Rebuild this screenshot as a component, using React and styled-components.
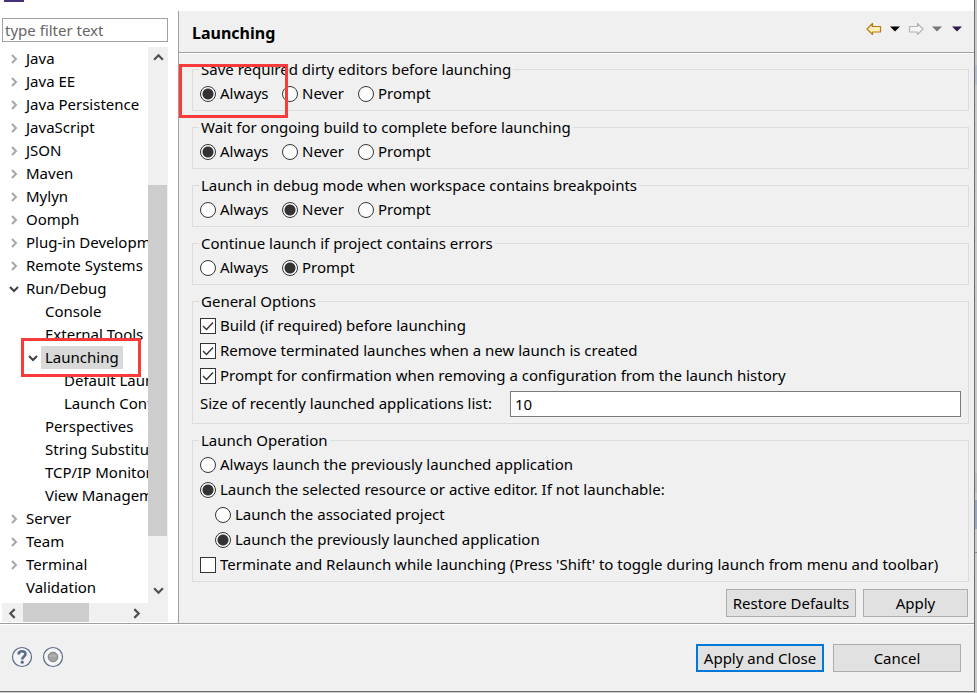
import { useState } from "react";
import styled, { createGlobalStyle } from "styled-components";

const treeItems = [
  { label: "Java", level: 0, state: "closed" },
  { label: "Java EE", level: 0, state: "closed" },
  { label: "Java Persistence", level: 0, state: "closed" },
  { label: "JavaScript", level: 0, state: "closed" },
  { label: "JSON", level: 0, state: "closed" },
  { label: "Maven", level: 0, state: "closed" },
  { label: "Mylyn", level: 0, state: "closed" },
  { label: "Oomph", level: 0, state: "closed" },
  { label: "Plug-in Development", level: 0, state: "closed" },
  { label: "Remote Systems", level: 0, state: "closed" },
  { label: "Run/Debug", level: 0, state: "open" },
  { label: "Console", level: 1 },
  { label: "External Tools", level: 1 },
  { label: "Launching", level: 1, state: "open", selected: true },
  { label: "Default Launchers", level: 2 },
  { label: "Launch Configurations", level: 2 },
  { label: "Perspectives", level: 1 },
  { label: "String Substitution", level: 1 },
  { label: "TCP/IP Monitor", level: 1 },
  { label: "View Management", level: 1 },
  { label: "Server", level: 0, state: "closed" },
  { label: "Team", level: 0, state: "closed" },
  { label: "Terminal", level: 0, state: "closed" },
  { label: "Validation", level: 0 },
];

const launchGroups = [
  {
    name: "save",
    title: "Save required dirty editors before launching",
    options: ["Always", "Never", "Prompt"],
    value: "Always",
    marked: true,
  },
  {
    name: "wait",
    title: "Wait for ongoing build to complete before launching",
    options: ["Always", "Never", "Prompt"],
    value: "Always",
  },
  {
    name: "debug",
    title: "Launch in debug mode when workspace contains breakpoints",
    options: ["Always", "Never", "Prompt"],
    value: "Never",
  },
  {
    name: "errors",
    title: "Continue launch if project contains errors",
    options: ["Always", "Prompt"],
    value: "Prompt",
  },
];

const Chevron = ({ dir, color = "#505050", size = 10, weight = 2 }) => {
  const paths = {
    right: "M3 1 L7 5 L3 9",
    left: "M7 1 L3 5 L7 9",
    down: "M1 3 L5 7 L9 3",
    up: "M1 7 L5 3 L9 7",
  };
  return (
    <svg width={size} height={size} viewBox="0 0 10 10" aria-hidden="true">
      <path d={paths[dir]} fill="none" stroke={color} strokeWidth={weight} />
    </svg>
  );
};

const Arrow = ({ back }) => (
  <svg width="16" height="14" viewBox="0 0 16 14" aria-hidden="true">
    <path
      d={
        back
          ? "M1 7 L6.5 1.5 V4.5 H14.5 V10 H6.5 V12.5 Z"
          : "M15 7 L9.5 1.5 V4.5 H1.5 V10 H9.5 V12.5 Z"
      }
      fill={back ? "#fdf0b8" : "#f6f6f6"}
      stroke={back ? "#b87a14" : "#b4b4b4"}
      strokeWidth="1.2"
      strokeLinejoin="round"
    />
  </svg>
);

const Caret = ({ color }) => (
  <svg width="10" height="6" viewBox="0 0 10 6" aria-hidden="true">
    <path d="M0 0.5 H10 L5 5.5 Z" fill={color} />
  </svg>
);

const HelpIcon = () => (
  <svg width="22" height="22" viewBox="0 0 22 22" aria-hidden="true">
    <circle cx="11" cy="11" r="9.5" fill="#f4f4f6" stroke="#5a6b8c" strokeWidth="1.2" />
    <path
      d="M7.6 8.4 C7.6 4.2 14.6 4.3 14.5 8 C14.4 10.6 11.2 10.6 11.2 13.6"
      fill="none"
      stroke="#5a6b8c"
      strokeWidth="2.6"
    />
    <circle cx="11.2" cy="16.2" r="1.6" fill="#5a6b8c" />
  </svg>
);

const RecordIcon = () => (
  <svg width="22" height="22" viewBox="0 0 22 22" aria-hidden="true">
    <circle cx="11" cy="11" r="9.5" fill="#f6f6f6" stroke="#5a6b8c" strokeWidth="1.2" />
    <circle cx="11" cy="11" r="4.8" fill="#a2a2a2" stroke="#808080" />
    <path d="M7.5 10 H14.5" stroke="#b4b4b4" strokeWidth="1.5" />
  </svg>
);

const Option = ({ type, name, label, ...rest }) => (
  <OptionLabel>
    {type === "radio" ? (
      <Radio type="radio" name={name} {...rest} />
    ) : (
      <CheckHolder>
        <Check type="checkbox" name={name} {...rest} />
        <svg width="16" height="16" viewBox="0 0 16 16" aria-hidden="true">
          <path d="M3 8 L6.5 11.5 L13 4.5" fill="none" stroke="#333" strokeWidth="1.4" />
        </svg>
      </CheckHolder>
    )}
    {label}
  </OptionLabel>
);

const App = () => {
  const [filter, setFilter] = useState("");

  return (
    <>
      <GlobalStyle />
      <Desktop>
        <Dialog>
          <TitleStrip>
            <AppLogo />
          </TitleStrip>
          <Body>
            <Sidebar>
              <FilterInput
                type="text"
                aria-label="Filter preferences"
                placeholder="type filter text"
                value={filter}
                onChange={(e) => setFilter(e.target.value)}
              />
              <TreeArea>
                <Tree>
                  {treeItems.map((item) => (
                    <TreeRow key={item.label} $level={item.level}>
                      <Twisty>
                        {item.state === "closed" && (
                          <Chevron dir="right" color="#a6a6a6" />
                        )}
                        {item.state === "open" && <Chevron dir="down" color="#404040" />}
                      </Twisty>
                      <TreeLabel $selected={item.selected}>{item.label}</TreeLabel>
                      {item.selected && <TreeMark />}
                    </TreeRow>
                  ))}
                </Tree>
                <VerticalBar>
                  <ScrollButton aria-label="Scroll up">
                    <Chevron dir="up" size={11} />
                  </ScrollButton>
                  <Spacer $grow={118} />
                  <VerticalThumb />
                  <Spacer $grow={45} />
                  <ScrollButton aria-label="Scroll down">
                    <Chevron dir="down" size={11} />
                  </ScrollButton>
                </VerticalBar>
              </TreeArea>
              <HorizontalBar>
                <ScrollButton aria-label="Scroll left">
                  <Chevron dir="left" size={11} />
                </ScrollButton>
                <HorizontalThumb />
                <Spacer $grow={1} />
                <ScrollButton aria-label="Scroll right">
                  <Chevron dir="right" size={11} />
                </ScrollButton>
              </HorizontalBar>
            </Sidebar>

            <Page>
              <PageHeader>
                <PageTitle>Launching</PageTitle>
                <HistoryBar>
                  <IconButton aria-label="Back">
                    <Arrow back />
                  </IconButton>
                  <IconButton aria-label="Back history">
                    <Caret color="#000" />
                  </IconButton>
                  <IconButton aria-label="Forward">
                    <Arrow />
                  </IconButton>
                  <IconButton aria-label="Forward history">
                    <Caret color="#777" />
                  </IconButton>
                  <MenuButton aria-label="Menu">
                    <Caret color="#2e1a47" />
                  </MenuButton>
                </HistoryBar>
              </PageHeader>

              <Groups>
                {launchGroups.map((group) => (
                  <Group key={group.name}>
                    <Legend>{group.title}</Legend>
                    <OptionRow>
                      {group.options.map((option) => (
                        <Option
                          key={option}
                          type="radio"
                          name={group.name}
                          label={option}
                          defaultChecked={option === group.value}
                        />
                      ))}
                    </OptionRow>
                    {group.marked && <GroupMark />}
                  </Group>
                ))}

                <Group>
                  <Legend>General Options</Legend>
                  <Option
                    type="checkbox"
                    name="build"
                    label="Build (if required) before launching"
                    defaultChecked
                  />
                  <Option
                    type="checkbox"
                    name="remove"
                    label="Remove terminated launches when a new launch is created"
                    defaultChecked
                  />
                  <Option
                    type="checkbox"
                    name="confirm"
                    label="Prompt for confirmation when removing a configuration from the launch history"
                    defaultChecked
                  />
                  <SizeRow>
                    <SizeLabel htmlFor="historySize">
                      Size of recently launched applications list:
                    </SizeLabel>
                    <SizeInput id="historySize" type="text" defaultValue="10" />
                  </SizeRow>
                </Group>

                <Group>
                  <Legend>Launch Operation</Legend>
                  <Option
                    type="radio"
                    name="operation"
                    label="Always launch the previously launched application"
                  />
                  <Option
                    type="radio"
                    name="operation"
                    label="Launch the selected resource or active editor. If not launchable:"
                    defaultChecked
                  />
                  <Indented>
                    <Option
                      type="radio"
                      name="fallback"
                      label="Launch the associated project"
                    />
                    <Option
                      type="radio"
                      name="fallback"
                      label="Launch the previously launched application"
                      defaultChecked
                    />
                  </Indented>
                  <Option
                    type="checkbox"
                    name="relaunch"
                    label="Terminate and Relaunch while launching (Press 'Shift' to toggle during launch from menu and toolbar)"
                  />
                </Group>
              </Groups>

              <PageButtons>
                <Button $width={130}>Restore Defaults</Button>
                <Button $width={105}>Apply</Button>
              </PageButtons>
            </Page>
          </Body>

          <Footer>
            <FooterIcons>
              <IconButton aria-label="Help">
                <HelpIcon />
              </IconButton>
              <IconButton aria-label="Record preferences">
                <RecordIcon />
              </IconButton>
            </FooterIcons>
            <FooterButtons>
              <PrimaryButton $width={128}>Apply and Close</PrimaryButton>
              <Button $width={128}>Cancel</Button>
            </FooterButtons>
          </Footer>
        </Dialog>
      </Desktop>
    </>
  );
};

//Styled Components
const GlobalStyle = createGlobalStyle`
  * {
    box-sizing: border-box;
  }

  body {
    margin: 0;
    color: #000;
    font-family: "Noto Sans", "Open Sans", sans-serif;
    font-size: 15px;
    line-height: 23px;
  }

  button, input {
    font: inherit;
    color: inherit;
  }

  svg {
    display: block;
    flex: none;
  }
`;

//The window behind the dialog shows through as a thin strip on the right
const Desktop = styled.div`
  display: flex;
  min-height: 100vh;
  padding: 0 2px 1px 0;
  background: linear-gradient(
    #cacaca 65px,
    #b4bfcd 65px 85px,
    #cacaca 85px 473px,
    #bfbfbf 473px 493px,
    #cacaca 493px 500px,
    #9aa8c0 500px 529px,
    #cacaca 529px 552px,
    #8a8a8a 552px 553px,
    #cacaca 553px
  );
`;

const Dialog = styled.main`
  display: flex;
  flex-direction: column;
  flex: 1;
  min-width: 0;
  border-right: 1px solid #6e6e6e;
  border-bottom: 1px solid #6e6e6e;
  background: #f0f0f0;
`;

const TitleStrip = styled.div`
  height: 11px;
  padding-left: 4px;
  background: #fff;
`;

const AppLogo = styled.div`
  width: 20px;
  height: 2px;
  background: #46307c;
`;

const Body = styled.div`
  display: flex;
  border-bottom: 1px solid #a0a0a0;
`;

const Sidebar = styled.nav`
  display: flex;
  flex-direction: column;
  flex: none;
  width: 178px;
  padding: 7px 10px 1px 2px;
  background: #fff;
`;

const FilterInput = styled.input`
  width: 100%;
  height: 24px;
  margin-bottom: 5px;
  padding: 0 2px;
  border: 1px solid #a0a0a6;
  border-radius: 0;
  background: #fff;

  &::placeholder {
    color: #666;
    opacity: 1;
  }
`;

const TreeArea = styled.div`
  display: flex;
  flex: 1;
  min-height: 0;
`;

const Tree = styled.ul`
  flex: 1;
  min-width: 0;
  margin: 0;
  padding: 0;
  overflow: hidden;
  list-style: none;
`;

const TreeRow = styled.li`
  position: relative;
  display: flex;
  align-items: center;
  height: 23px;
  padding-left: ${(props) => props.$level * 19 + 7}px;
  white-space: nowrap;
`;

const Twisty = styled.span`
  flex: none;
  width: 13px;
  padding-top: 1px;
`;

const TreeLabel = styled.span`
  padding: 0 4px;
  background: ${(props) => (props.$selected ? "#d9d9d9" : "transparent")};
`;

const TreeMark = styled.div`
  position: absolute;
  z-index: 1;
  top: -8px;
  left: 19px;
  width: 120px;
  height: 39px;
  border: 3px solid #fb3b3b;
  pointer-events: none;
`;

const VerticalBar = styled.div`
  display: flex;
  flex-direction: column;
  flex: none;
  width: 20px;
  background: #f0f0f0;
  padding-bottom: 2px;
`;

const HorizontalBar = styled.div`
  display: flex;
  height: 19px;
  padding-right: 22px;
  background: #f0f0f0;
`;

const ScrollButton = styled.button`
  display: flex;
  align-items: center;
  justify-content: center;
  flex: none;
  width: 20px;
  height: 20px;
  padding: 0;
  border: 0;
  background: transparent;
`;

const Spacer = styled.div`
  flex: ${(props) => props.$grow} 0 0;
`;

const VerticalThumb = styled.div`
  flex: 352 0 0;
  margin-right: 1px;
  background: #cdcdcd;
`;

const HorizontalThumb = styled.div`
  width: 66px;
  margin-left: 1px;
  background: #cdcdcd;
`;

const Page = styled.section`
  display: flex;
  flex-direction: column;
  flex: 1;
  min-width: 0;
  border-left: 1px solid #a0a0a0;
`;

const PageHeader = styled.header`
  display: flex;
  align-items: center;
  justify-content: space-between;
  height: 42px;
  padding: 0 12px 0 13px;
  border-bottom: 1px solid #a0a0a0;
  box-shadow: 0 1px 0 #fff;
`;

const PageTitle = styled.h1`
  margin: 0;
  padding-top: 3px;
  font-size: 16px;
  font-weight: 700;
`;

const HistoryBar = styled.div`
  display: flex;
  align-items: center;
  gap: 8px;
  padding-bottom: 5px;
`;

const IconButton = styled.button`
  padding: 0;
  border: 0;
  background: transparent;
`;

const MenuButton = styled(IconButton)`
  margin-left: 2px;
`;

const Groups = styled.div`
  display: flex;
  flex-direction: column;
  gap: 5px;
  padding: 5px 5px 0 13px;
`;

const Group = styled.fieldset`
  position: relative;
  min-width: 0;
  margin: 0;
  padding: 0 7px 4px;
  border: 1px solid #dcdcdc;
`;

const Legend = styled.legend`
  height: 23px;
  padding: 0 2px;
  margin-left: -1px;
`;

const GroupMark = styled.div`
  position: absolute;
  z-index: 1;
  top: -17px;
  left: -14px;
  width: 109px;
  height: 54px;
  border: 3px solid #fb3b3b;
  pointer-events: none;
`;

const OptionRow = styled.div`
  display: grid;
  grid-template-columns: 70px 64px auto;
  gap: 12px;
`;

const OptionLabel = styled.label`
  display: flex;
  align-items: center;
  gap: 4px;
  height: 25px;
  white-space: nowrap;
`;

const Radio = styled.input`
  appearance: none;
  flex: none;
  width: 16px;
  height: 16px;
  margin: 0;
  border: 1px solid #333;
  border-radius: 50%;
  background: #fff;

  &:checked {
    background: radial-gradient(circle, #333 5px, #fff 6px);
  }
`;

const CheckHolder = styled.span`
  display: grid;

  > * {
    grid-area: 1 / 1;
  }

  > svg {
    visibility: hidden;
    pointer-events: none;
  }

  > input:checked + svg {
    visibility: visible;
  }
`;

const Check = styled.input`
  appearance: none;
  width: 16px;
  height: 16px;
  margin: 0;
  border: 1px solid #333;
  background: #fff;
`;

const SizeRow = styled.div`
  display: flex;
  align-items: center;
  gap: 7px;
  height: 31px;
`;

const SizeLabel = styled.label`
  min-width: 303px;
`;

const SizeInput = styled.input`
  flex: 1;
  min-width: 0;
  height: 26px;
  padding: 0 4px;
  border: 1px solid #7a7a7a;
  background: #fff;
`;

const Indented = styled.div`
  padding-left: 15px;
`;

const PageButtons = styled.div`
  display: flex;
  justify-content: flex-end;
  gap: 7px;
  padding: 7px 6px 6px;
`;

const Button = styled.button`
  min-width: ${(props) => props.$width}px;
  height: 28px;
  padding: 0 2px;
  border: 1px solid #adadad;
  background: #e1e1e1;
  white-space: nowrap;
`;

const PrimaryButton = styled(Button)`
  border: 2px solid #0078d7;
`;

const Footer = styled.footer`
  display: flex;
  align-items: center;
  justify-content: space-between;
  flex: 1;
  padding: 0 13px 0 11px;
  border-top: 1px solid #fff;
`;

const FooterIcons = styled.div`
  display: flex;
  gap: 9px;
  padding-bottom: 2px;
`;

const FooterButtons = styled.div`
  display: flex;
  gap: 9px;
`;

export default App;
